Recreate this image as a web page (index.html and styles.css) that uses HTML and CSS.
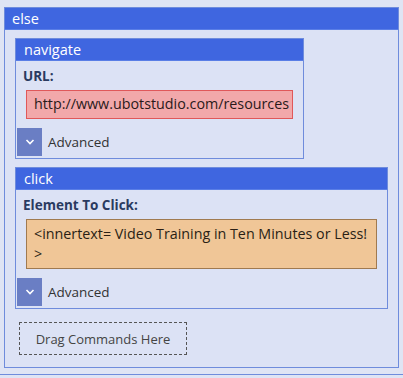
FILE: index.html
```html
<!DOCTYPE html>
<html>
<head>
<meta charset="utf-8">
<link rel="stylesheet" href="styles.css">
</head>
<body>
<div class="frame">
  <div class="panel outer">
    <div class="head">else</div>
    <div class="outer-body">
      <div class="panel cmd nav">
        <div class="head">navigate</div>
        <div class="label">URL:</div>
        <div class="field url">http://www.ubotstudio.com/resources</div>
        <div class="adv">
          <span class="chev"><svg width="12" height="8" viewBox="0 0 12 8"><path d="M2.5 2 L6 5.5 L9.5 2" fill="none" stroke="#fff" stroke-width="1.6"/></svg></span>
          <span class="adv-text">Advanced</span>
        </div>
      </div>
      <div class="panel cmd click">
        <div class="head">click</div>
        <div class="label">Element To Click:</div>
        <div class="field elem">&lt;innertext= Video Training in Ten Minutes or Less!<br>&gt;</div>
        <div class="adv">
          <span class="chev"><svg width="12" height="8" viewBox="0 0 12 8"><path d="M2.5 2 L6 5.5 L9.5 2" fill="none" stroke="#fff" stroke-width="1.6"/></svg></span>
          <span class="adv-text">Advanced</span>
        </div>
      </div>
      <div class="drop">Drag Commands Here</div>
    </div>
  </div>
</div>
</body>
</html>
```

FILE: styles.css
```css
html, body {
  margin: 0;
  padding: 0;
  background: #dfe4f4;
  font-family: "Open Sans", "Noto Sans", sans-serif;
  font-size: 13px;
  color: #222;
}
.frame {
  height: 375px;
  border-bottom: 1px solid #6f8cdc;
  box-sizing: border-box;
  padding: 7px 0 0 4px;
}
.panel {
  border: 1px solid #6f8cdc;
  background: #dce2f5;
  box-sizing: border-box;
}
.head {
  background: #3f66e0;
  color: #fff;
  height: 22px;
  line-height: 21px;
  padding-left: 7px;
  border-bottom: 1px solid #5a7ee6;
  box-sizing: border-box;
  font-size: 14.5px;
}
.outer {
  width: 395px;
  height: 361px;
}
.outer-body {
  display: flex;
  flex-direction: column;
  align-items: flex-start;
  gap: 8px;
  padding: 8px 10px 0 10px;
}
.cmd .head {
  padding-left: 8px;
}
.nav { width: 289px; }
.click { width: 373px; }
.label {
  font-weight: bold;
  font-size: 13.5px;
  color: #2a3a60;
  padding: 5px 0 0 7px;
  height: 24px;
  line-height: 20px;
  box-sizing: border-box;
}
.field {
  margin: 5px 10px 0 10px;
  padding: 2px 7px;
  line-height: 20px;
  font-size: 14.3px;
  box-sizing: border-box;
  white-space: nowrap;
}
.url {
  background: #f2a8aa;
  border: 1px solid #e0585a;
  height: 29px;
  padding-top: 3px;
  color: #2a1a1a;
}
.elem {
  background: #f0c697;
  border: 1px solid #a07a50;
  height: 50px;
  padding-top: 4px;
  color: #2a1f15;
}
.adv {
  display: flex;
  align-items: center;
  gap: 6px;
  margin: 9px 0 2px 1px;
}
.chev {
  width: 25px;
  height: 28px;
  background: #6a7ec4;
  display: flex;
  align-items: center;
  justify-content: center;
}
.adv-text {
  font-size: 13.5px;
  color: #333;
}
.drop {
  margin: 5px 0 0 4px;
  width: 168px;
  height: 33px;
  border: 1px dashed #555;
  box-sizing: border-box;
  display: flex;
  align-items: center;
  justify-content: center;
  color: #444;
  font-size: 13px;
}
```
